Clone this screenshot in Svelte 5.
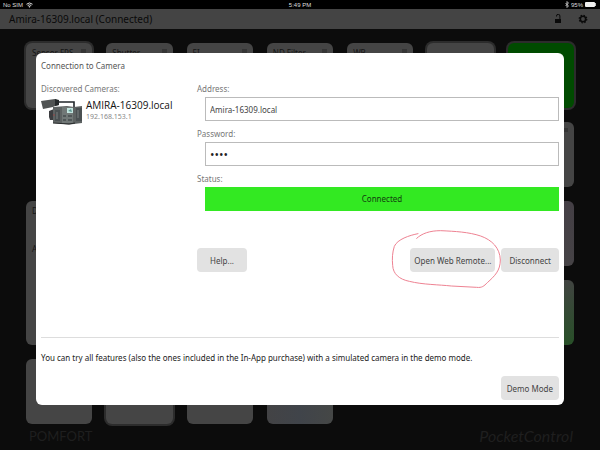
<script>
  const tiles = [
    { col: 1, row: 1, title: 'Sensor FPS', framed: true },
    { col: 2, row: 1, title: 'Shutter' },
    { col: 3, row: 1, title: 'EI' },
    { col: 4, row: 1, title: 'ND Filter' },
    { col: 5, row: 1, title: 'WB' },
    { col: 6, row: 1, kind: 'plain', framed: true },
    { col: 7, row: 1, kind: 'record', framed: true },
    { col: 7, row: 2, kind: 'gripped' },
    { col: 7, row: 3, kind: 'mauve' },
    { col: 1, row: 3, kind: 'tall', title: 'Display', text: 'Auto' },
    { col: 7, row: 4, kind: 'green' },
    { col: 1, row: 5, kind: 'plain' },
    { col: 2, row: 5, kind: 'plain', framed: true },
    { col: 3, row: 5, kind: 'plain' },
    { col: 4, row: 5, kind: 'tint' }
  ]

  let address = $state('Amira-16309.local')
  let password = $state('arri')
</script>

<div class="app">
  <div class="statusbar">
    <span class="side">
      No SIM
      <svg width="7" height="6" viewBox="0 0 14 11" aria-hidden="true">
        <path d="M1 4a9 9 0 0 1 12 0M3.4 6.6a5.6 5.6 0 0 1 7.2 0" fill="none" stroke="#ddd" stroke-width="2" />
        <path d="M4.8 8.4a3.4 3.4 0 0 1 4.4 0L7 11z" fill="#ddd" />
      </svg>
    </span>
    <span class="clock">5:49 PM</span>
    <span class="side right">
      <svg width="4" height="7" viewBox="0 0 8 14" aria-hidden="true">
        <path d="M1 4l6 6-3 3V1l3 3-6 6" fill="none" stroke="#ddd" stroke-width="1.5" />
      </svg>
      95%
      <svg width="12" height="5" viewBox="0 0 12 5" aria-hidden="true">
        <rect width="10" height="5" rx="1" fill="#eee" />
        <rect x="10" y="1" width="1" height="3" fill="#bbb" />
      </svg>
    </span>
  </div>

  <header>
    <h1>Amira-16309.local (Connected)</h1>
    <button class="icon" aria-label="Lock">
      <svg width="8" height="10" viewBox="0 0 8 10">
        <rect x="1" y="5" width="6" height="4" fill="#0a0a0a" />
        <path d="M2.5 2.5V2a1.6 1.6 0 0 1 3.4 0v3" fill="none" stroke="#0a0a0a" />
      </svg>
    </button>
    <button class="icon" aria-label="Settings">
      <svg width="10" height="10" viewBox="0 0 10 10">
        <circle cx="5" cy="5" r="2.7" fill="none" stroke="#0a0a0a" stroke-width="1.6" />
        <circle cx="5" cy="5" r="3.8" fill="none" stroke="#0a0a0a" stroke-width="1.2" stroke-dasharray="1.5 1.485" />
      </svg>
    </button>
  </header>

  <main>
    {#each tiles as tile}
      <div
        class="tile {tile.kind ?? ''}"
        class:framed={tile.framed}
        style="grid-column: {tile.col}; grid-row: {tile.row} / span {tile.kind === 'tall' ? 2 : 1}"
      >
        {#if tile.title}<span>{tile.title}</span>{/if}
        {#if !tile.kind || tile.kind === 'gripped'}<i class="grip"></i>{/if}
        {#if tile.text}<p>{tile.text}</p>{/if}
      </div>
    {/each}
  </main>

  <footer>
    <span class="pomfort">POMFORT</span>
    <span class="product">PocketControl</span>
  </footer>

  <div class="overlay">
    <div class="dialog" role="dialog" aria-labelledby="dialog-title">
      <h2 id="dialog-title">Connection to Camera</h2>

      <div class="columns">
        <section>
          <h3>Discovered Cameras:</h3>
          <div class="camera">
            <svg width="42" height="27" viewBox="0 0 42 27" aria-hidden="true">
              <path d="M17 4h16v7" fill="none" stroke="#20262a" stroke-width="1.6" />
              <path d="M0 3l14-2 2 1 2 1v4l-4 1-2 1L2 11z" fill="#505353" />
              <path d="M14 1l4 1v5l-4 1z" fill="#25292b" />
              <path d="M8 13l5-2v11H9l-1-3z" fill="#3c3d40" />
              <path d="M12 9l14-1 7 1 8-1v17l-8 1-5 .5L12 25z" fill="#5d6262" />
              <path d="M14 12h5v11h-5zM35 10h6v13h-6z" fill="#4a5052" />
              <path d="M16 14v7M37 12v8" stroke="#7b8080" />
              <path d="M21 9h11v16H21z" fill="#717877" />
              <path d="M26 10h6v5h-6z" fill="#c3e5df" />
              <path d="M27 13l3-2 1 3z" fill="#5d9490" />
              <path d="M22 17h3v2h-3zM27 17h4v2h-4zM22 21h3v2h-3zM27 21h4v2h-4z" fill="#505758" />
              <path d="M12 25l16 1 6-1" fill="none" stroke="#292c2d" />
              <path d="M13 16v2" stroke="#944" />
            </svg>
            <div>
              <strong>AMIRA-16309.local</strong>
              <small>192.168.153.1</small>
            </div>
          </div>
        </section>

        <form onsubmit={e => e.preventDefault()}>
          <label for="address">Address:</label>
          <input id="address" type="text" bind:value={address} />
          <label for="password">Password:</label>
          <input id="password" type="password" bind:value={password} />
          <label for="status">Status:</label>
          <output id="status">Connected</output>

          <div class="actions">
            <button type="button" class="help">Help...</button>
            <span class="marked">
              <button type="button">Open Web Remote...</button>
              <svg class="scribble" width="112" height="62" viewBox="0 0 336 186" aria-hidden="true">
                <path
                  d="M84 17C58 22 22 34 13 55C7 74 6 92 8 112C9 138 28 154 58 160C98 170 148 170 184 174L260 178C276 180 282 174 292 164C314 144 331 128 331 96C330 60 306 36 272 24C236 12 196 10 152 8C120 8 96 16 80 31"
                />
              </svg>
            </span>
            <button type="button">Disconnect</button>
          </div>
        </form>
      </div>

      <div class="demo">
        <p>You can try all features (also the ones included in the In-App purchase) with a simulated camera in the demo mode.</p>
        <button type="button">Demo Mode</button>
      </div>
    </div>
  </div>
</div>

<style>
  :global(body) {
    margin: 0;
    background: #0c0c0c;
  }

  .app {
    position: relative;
    display: flex;
    flex-direction: column;
    min-height: 100vh;
    font-family: 'Noto Sans', 'Open Sans', sans-serif;
    font-size: 8px;
    color: #222;
  }

  h1,
  h2,
  h3,
  p {
    margin: 0;
    font-weight: normal;
  }

  button,
  input {
    box-sizing: border-box;
    font: inherit;
  }

  .statusbar {
    display: flex;
    align-items: center;
    height: 9px;
    padding: 0 3px;
    background: #000;
    color: #ddd;
    font-family: 'Liberation Sans', sans-serif;
    font-size: 6px;
  }
  .side {
    flex: 1;
    display: flex;
    align-items: center;
    gap: 3px;
  }
  .side.right {
    justify-content: flex-end;
    gap: 2px;
  }

  header {
    display: flex;
    align-items: center;
    gap: 16px;
    height: 20px;
    padding: 0 12px 0 9px;
    background: #444;
  }
  h1 {
    flex: 1;
    font-size: 10px;
    line-height: 20px;
    color: #0a0a0a;
  }
  .icon {
    display: flex;
    padding: 0;
    border: 0;
    background: none;
  }

  main {
    display: grid;
    grid-template-columns: repeat(7, 1fr);
    grid-template-rows: repeat(5, 65px);
    gap: 14px;
    padding: 14px 26px 0;
  }
  .tile {
    display: flex;
    flex-wrap: wrap;
    align-content: flex-start;
    justify-content: space-between;
    padding: 4px 6px;
    border-radius: 6px;
    background: #454545;
    color: #151515;
    font-size: 8px;
    line-height: 12px;
    white-space: nowrap;
  }
  .tile.framed {
    box-shadow: 0 0 0 2px #2c2c2c;
  }
  .tile.record {
    background: #004b00;
  }
  .tile.mauve {
    background: linear-gradient(#443f45, #464346);
  }
  .tile.green {
    background: linear-gradient(#414441, #285028);
  }
  .tile.tint {
    background: linear-gradient(90deg, #434345, #40444a, #454746);
  }
  .tile.tall p {
    width: 100%;
    margin-top: 26px;
  }
  .grip {
    width: 5px;
    height: 4px;
    margin: 2px 0 0 auto;
    background: #353535;
  }

  footer {
    display: flex;
    justify-content: space-between;
    align-items: center;
    padding: 2px 27px 0 29px;
    font-family: Lato, sans-serif;
    color: #1f1f1f;
  }
  .pomfort {
    font-size: 13px;
  }
  .product {
    font-size: 16px;
    font-style: italic;
  }

  .overlay {
    position: absolute;
    inset: 0;
    padding: 53px 36px 0;
  }
  .dialog {
    padding: 5px;
    border-radius: 6px;
    background: #fff;
  }
  h2 {
    font-size: 8px;
    line-height: 15px;
    color: #555;
  }

  .columns {
    display: flex;
    padding-top: 8px;
  }
  section {
    flex: 0 0 156px;
  }
  h3,
  label {
    display: block;
    font-size: 8px;
    line-height: 16px;
    color: #777;
  }
  .camera {
    display: flex;
    gap: 3px;
    padding-top: 1px;
  }
  .camera strong,
  .camera small {
    display: block;
    font-weight: normal;
  }
  .camera strong {
    font-family: 'Open Sans', sans-serif;
    font-size: 10px;
    line-height: 14px;
    color: #111;
  }
  .camera small {
    font-size: 7px;
    line-height: 10px;
    color: #888;
  }

  form {
    flex: 1;
    display: flex;
    flex-direction: column;
  }
  input,
  output {
    height: 24px;
    margin: 0 0 5px 8px;
  }
  input {
    padding: 0 4px;
    border: 1px solid #bbb;
    border-radius: 0;
    background: #fff;
    color: #444;
  }
  input[type='password'] {
    font-family: 'Open Sans', sans-serif;
    font-size: 12px;
    color: #222;
  }
  output {
    background: #33e922;
    color: #123d0e;
    line-height: 24px;
    text-align: center;
  }

  .actions {
    display: flex;
    gap: 6px;
    padding-top: 32px;
  }
  .dialog button {
    height: 24px;
    padding: 0 8px;
    border: 0;
    border-radius: 4px;
    background: #e2e2e2;
    color: #444;
  }
  .actions .help {
    min-width: 50px;
    margin-right: auto;
  }
  .marked {
    position: relative;
  }
  .dialog .marked button {
    padding: 0 4px;
  }
  .scribble {
    position: absolute;
    top: -20px;
    left: -20px;
    pointer-events: none;
  }
  .scribble path {
    fill: none;
    stroke: #ee8292;
    stroke-width: 3;
    stroke-linecap: round;
  }

  .demo {
    display: flex;
    flex-direction: column;
    align-items: flex-end;
    gap: 11px;
    margin-top: 65px;
    padding-top: 12px;
    border-top: 1px solid #ddd;
  }
  .demo p {
    width: 100%;
    line-height: 15px;
  }
  .dialog .demo button {
    padding: 0 6px;
  }
</style>
